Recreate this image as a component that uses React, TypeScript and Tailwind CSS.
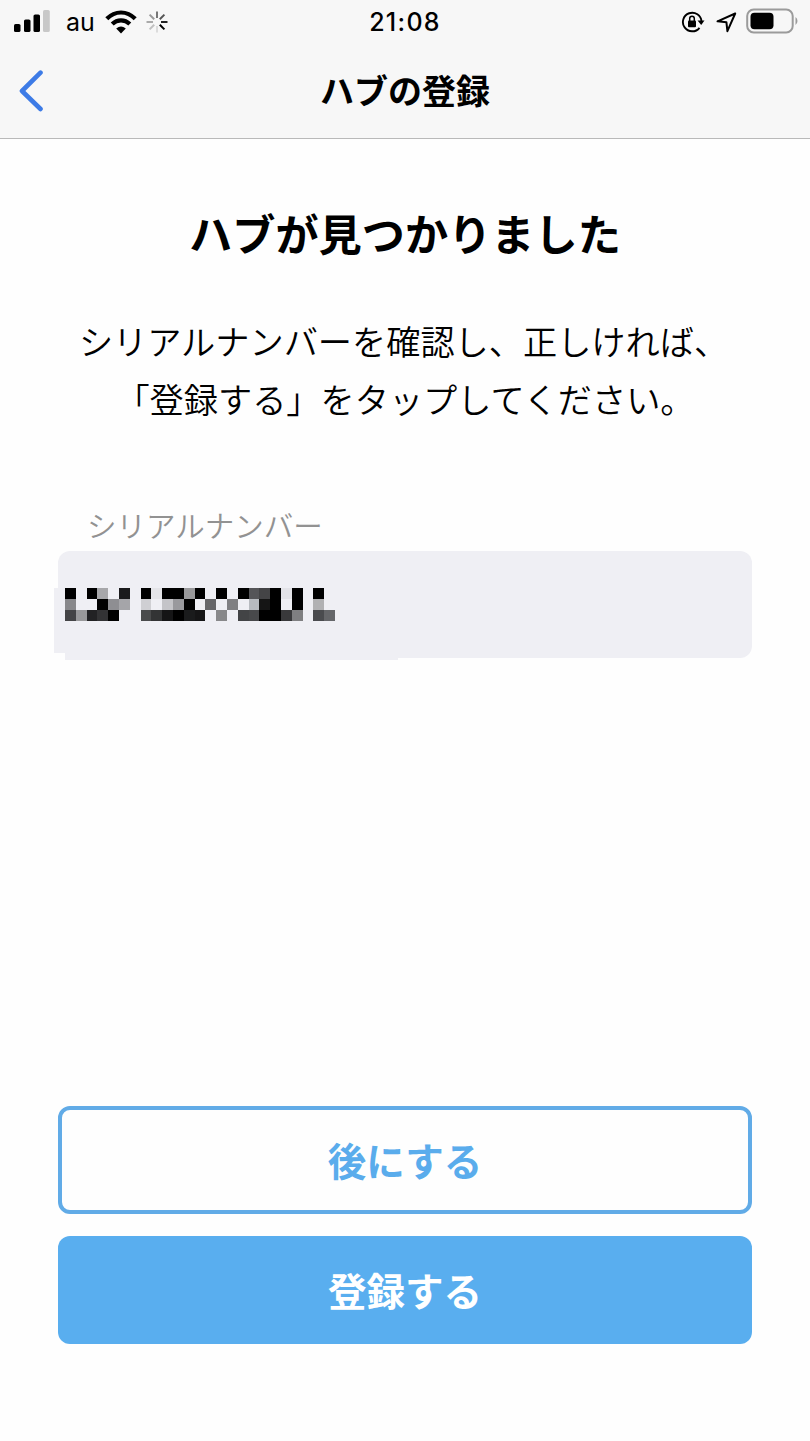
import { useState } from 'react';

const B = '#000000';
const BG = '';

// Serial number is masked with a 25x3 mosaic
const mosaic: string[][] = [
  [B, BG, B, '#a7a7aa', BG, '#1a1a1c', BG, B, '#e4e4e8', B, B, '#99999b', B, BG, B, BG, B, '#555558', '#444446', B, '#e3e3e8', B, BG, B, BG],
  ['#88888b', BG, BG, B, '#8e8e92', '#a5a5a9', BG, '#cfcfd3', BG, '#c4c4c8', '#99999d', B, BG, '#666669', BG, '#7f7f82', BG, '#b7babf', '#151515', B, BG, B, BG, '#b1b1b3', BG],
  ['#444446', '#99999b', '#222224', '#333335', B, BG, BG, '#4a4b4c', '#333435', '#151516', B, '#1a1b1c', '#151516', BG, '#88888a', BG, '#434446', '#48494b', B, B, '#39393b', '#7f7f81', BG, '#4a4b4e', '#656669'],
];

function StatusBar() {
  return (
    <div className="grid h-11 grid-cols-3 items-center">
      <div className="flex items-center pl-[14px]">
        <svg className="-mt-px" width="36" height="23" viewBox="0 0 36 23">
          <rect x="0" y="14" width="6.5" height="8" rx="1.6" />
          <rect x="10" y="9.5" width="6.5" height="12.5" rx="1.6" />
          <rect x="19.5" y="4.5" width="6.5" height="17.5" rx="1.6" />
          <rect x="29" y="0" width="6.8" height="22" rx="1.6" fill="#c8c8c8" />
        </svg>
        <span className="mt-px ml-[16px] font-['Inter'] text-[25px] leading-none">au</span>
        <svg className="ml-[10px]" width="32" height="24" viewBox="0 0 32 24" fill="none" stroke="#000" strokeWidth="4.2">
          <path d="M1.8 8.8Q8 2.5 16 2.5T30.200 8.800" />
          <path d="M7.200 14.100Q11 10.400 16 10.400T24.800 14.100" />
          <path d="M16 23.500L11.200 18.600Q16 14.600 20.800 18.600Z" fill="#000" stroke="none" />
        </svg>
        <svg className="ml-[9px]" width="22" height="22" viewBox="0 0 22 22" strokeWidth="2">
          <path d="M11 0.500V7" stroke="#777" />
          <path d="M18.400 3.600L13.800 8.200" stroke="#555" />
          <path d="M21.500 11H15" stroke="#222" />
          <path d="M18.400 18.400L13.800 13.800" stroke="#000" />
          <path d="M11 21.500V15" stroke="#dcdcdc" />
          <path d="M3.600 18.400L8.200 13.800" stroke="#c0c0c0" />
          <path d="M0.500 11H7" stroke="#aaa" />
          <path d="M3.600 3.600L8.200 8.200" stroke="#999" />
        </svg>
      </div>
      <div className="pt-px text-center font-['Inter'] text-[25px] leading-none font-medium tracking-[1.300px]">21:08</div>
      <div className="flex items-center justify-end pr-[12px]">
        <svg width="24" height="22" viewBox="0 0 24 22" fill="none">
          <path d="M20.500 10.500A9.300 9.300 0 1 0 18.500 16.800" stroke="#000" strokeWidth="1.900" />
          <path d="M16.500 9.500H23.500L20.200 14Z" fill="#000" />
          <rect x="7" y="9.500" width="8" height="6.800" rx="1" fill="#000" />
          <path d="M8.700 10V7.600a2.300 2.300 0 0 1 4.600 0V10" stroke="#000" strokeWidth="1.500" />
        </svg>
        <svg className="ml-[11px]" width="21" height="21" viewBox="0 0 21 21" fill="none" stroke="#000" strokeWidth="2" strokeLinejoin="round">
          <path d="M19.200 1.500L1.500 9.300L10.400 10.200L11.400 19.200Z" />
        </svg>
        <svg className="-mt-[2px] ml-[9px]" width="52" height="26" viewBox="0 0 52 26">
          <rect x="1.200" y="1.600" width="45.500" height="22.800" rx="6.500" fill="none" stroke="#9b9b9b" strokeWidth="2" />
          <rect x="4.500" y="4.800" width="23" height="16.400" rx="4" />
          <path d="M49.500 9Q51.500 10.500 51.500 13T49.500 17Z" fill="#9b9b9b" />
        </svg>
      </div>
    </div>
  );
}

function NavBar({ title }: { title: string }) {
  return (
    <div className="grid h-[94px] grid-cols-[60px_1fr_60px] items-center">
      <button aria-label="戻る" className="pl-[19px]">
        <svg width="25" height="42" viewBox="0 0 25 42" fill="none" stroke="#3d7be6" strokeWidth="4.600" strokeLinecap="round" strokeLinejoin="round">
          <path d="M21.500 2.700L3 21L21.500 39" />
        </svg>
      </button>
      <h1 className="-mt-[2px] text-center text-[34px] leading-none font-bold">{title}</h1>
    </div>
  );
}

function MaskedSerial() {
  return (
    <div className="ml-[7px] w-[270px]">
      {mosaic.map((row, y) => (
        <div key={y} className="flex h-[10.800px]">
          {row.map((color, x) => (
            <div key={x} className="h-full flex-1" style={{ backgroundColor: color || undefined }} />
          ))}
        </div>
      ))}
    </div>
  );
}

export default function App() {
  const [registered, setRegistered] = useState(false);

  return (
    <div className="flex h-[1441px] w-[810px] flex-col bg-[#fefefe] font-['Noto_Sans_CJK_JP',sans-serif] text-black">
      <header className="h-[139px] border-b border-[#b9b9b9] bg-[#f7f7f7]">
        <StatusBar />
        <NavBar title="ハブの登録" />
      </header>

      <main className="flex flex-1 flex-col px-[58px] pb-[97px]">
        <h2 className="mt-[61px] text-center text-[43.200px] leading-[64px] font-bold">ハブが見つかりました</h2>
        <p className="mt-[47px] text-center text-[34.200px] leading-[58px] font-[350] whitespace-nowrap">
          <span className="block pr-[3px]">シリアルナンバーを確認し、正しければ、</span>
          <span className="block">「登録する」をタップしてください。</span>
        </p>

        <div className="mt-[77px] pl-[29px] text-[29.500px] leading-[40px] font-[350] text-[#929292]">シリアルナンバー</div>
        <div className="relative mt-[7px] flex h-[107px] items-center rounded-xl bg-[#efeff4]">
          {/* edges of the masked area */}
          <div className="absolute top-[37px] -left-[4px] h-[65px] w-[11px] bg-[#efeff4]" />
          <div className="absolute top-[95px] left-0 h-[13px] w-[7px] bg-[#fefefe]" />
          <div className="absolute top-[95px] -left-[4px] h-[7px] w-[11px] bg-[#efeff4]" />
          <div className="absolute top-[95px] left-[7px] h-[14px] w-[333px] bg-[#efeff4]" />
          <MaskedSerial />
        </div>

        <div className="mt-auto flex flex-col gap-[22px] text-[38.500px] font-bold">
          <button className="h-[108px] rounded-xl border-4 border-[#61abe7] pb-[2px] leading-none text-[#5aacec]">後にする</button>
          <button
            className="h-[108px] rounded-xl bg-[#59aeef] pb-[2px] leading-none text-white"
            disabled={registered}
            onClick={() => setRegistered(true)}
          >
            登録する
          </button>
        </div>
      </main>
    </div>
  );
}
